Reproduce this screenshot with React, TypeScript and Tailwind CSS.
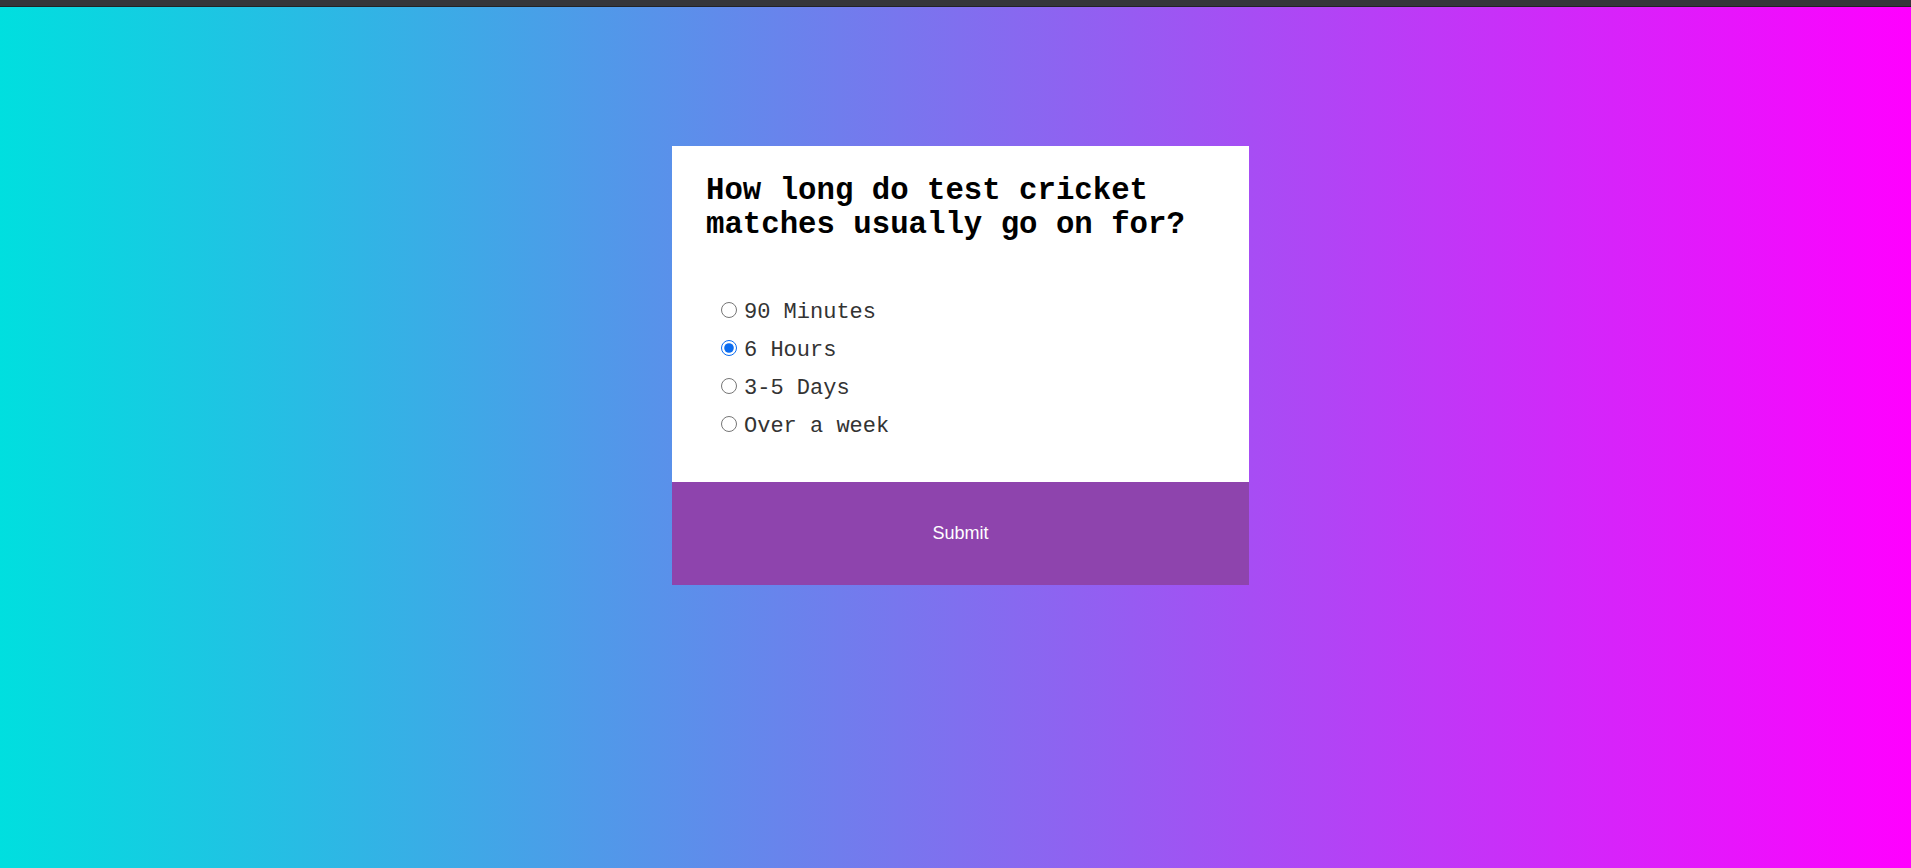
import { useState } from "react";

const options = ["90 Minutes", "6 Hours", "3-5 Days", "Over a week"];

export default function App() {
  const [choice, setChoice] = useState("6 Hours");

  return (
    <div className="flex min-h-screen flex-col bg-[linear-gradient(to_right,#00dfdf,#ff00ff)]">
      <div className="h-[7px] border-b border-[#222326] bg-[#35363a]" />
      <div className="flex justify-center pl-[10px] pt-[139px]">
        <form
          className="flex w-[577px] flex-col bg-white"
          onSubmit={(event) => event.preventDefault()}
        >
          <div className="pb-[43px] pl-[34px] pr-[30px] pt-[28px]">
            <h2 className="font-['Liberation_Mono','Courier_New',monospace] text-[30.7px] font-bold leading-[34px] text-black">
              How long do test cricket matches usually go on for?
            </h2>
            <div className="mt-[59px] flex flex-col gap-[14px] pl-[15px]">
              {options.map((option) => (
                <label
                  key={option}
                  className="flex items-center font-['Liberation_Mono','Courier_New',monospace] text-[22px] leading-[24px] text-[#333]"
                >
                  <input
                    type="radio"
                    name="answer"
                    className="mr-[7px] h-[16px] w-[16px] -translate-y-[3px] accent-[#0b6cf0]"
                    checked={choice === option}
                    onChange={() => setChoice(option)}
                  />
                  {option}
                </label>
              ))}
            </div>
          </div>
          <button
            type="submit"
            className="h-[103px] bg-[#8e44ad] font-['Liberation_Sans',Arial,sans-serif] text-[18px] text-white"
          >
            Submit
          </button>
        </form>
      </div>
    </div>
  );
}
